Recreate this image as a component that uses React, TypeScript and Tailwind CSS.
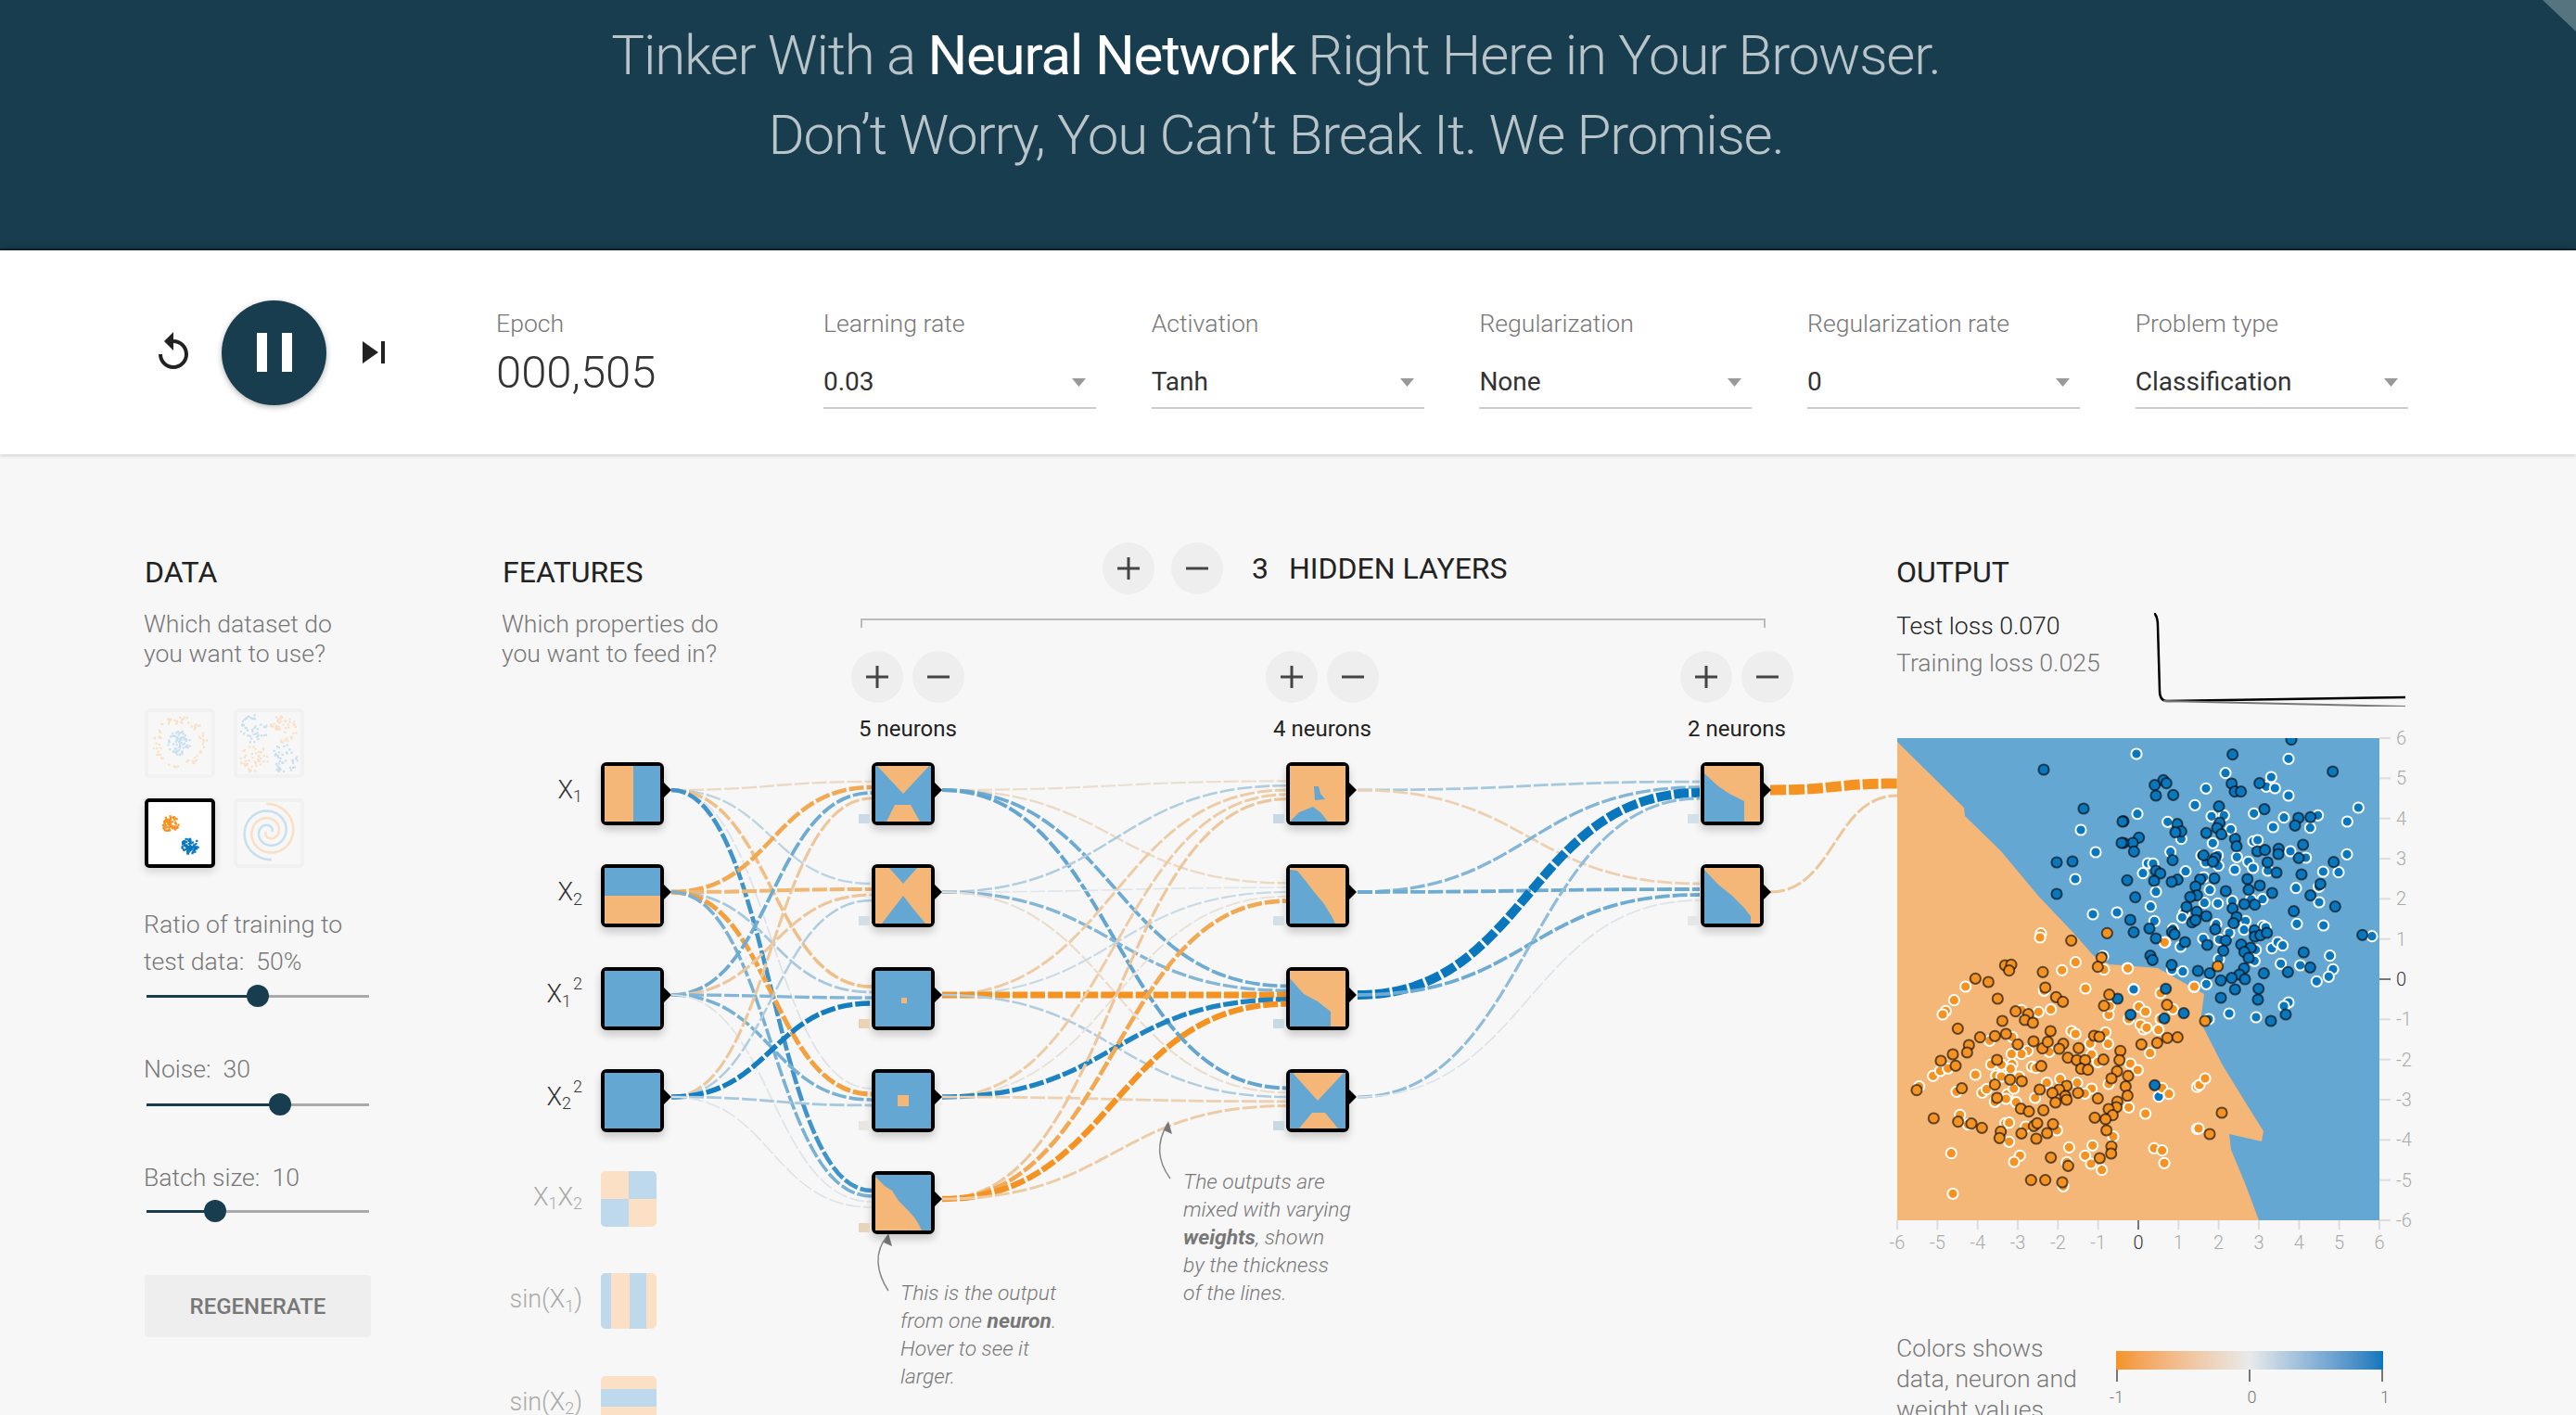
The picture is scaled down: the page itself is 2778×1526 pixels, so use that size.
import { ReactNode } from 'react'

const ORANGE = '#f59322'
const BLUE = '#0877bd'
const HEAT_ORANGE = '#f5b777'
const HEAT_BLUE = '#64a7d3'

type Pt = [number, number]

// small seeded generator so the thumbnails stay the same between renders
function rng(seed: number) {
  let a = seed
  return () => {
    a = (a + 0x6d2b79f5) | 0
    let t = Math.imul(a ^ (a >>> 15), 1 | a)
    t = (t + Math.imul(t ^ (t >>> 7), 61 | t)) ^ t
    return ((t ^ (t >>> 14)) >>> 0) / 4294967296
  }
}

function mix(weight: number) {
  const w = Math.min(1, Math.abs(weight))
  const end = weight < 0 ? [245, 147, 34] : [8, 119, 189]
  const start = [232, 234, 235]
  const c = start.map((s, i) => Math.round(s + (end[i] - s) * w))
  return `rgb(${c[0]},${c[1]},${c[2]})`
}

const inputXY = [852, 962, 1073, 1183]
const layer1Y = [852, 962, 1073, 1183, 1293]
const layer2Y = [852, 962, 1073, 1183]
const layer3Y = [852, 962]

// weights read off the picture, [from][to]
const w0 = [
  [-0.2, 0.2, -0.5, 0.06, 0.75],
  [-0.75, -0.6, 0.3, -0.85, 0.5],
  [0.55, -0.4, 0.45, 0.5, 0.05],
  [-0.4, 0.25, 0.95, 0.3, 0.05],
]
const w1 = [
  [-0.15, -0.2, 0.55, 0.6],
  [0.25, 0.04, 0.45, -0.15],
  [-0.35, 0.15, -1.35, 0.25],
  [-0.35, -0.1, 0.9, -0.3],
  [-0.4, -0.75, -1.15, -0.35],
]
const w2 = [
  [0.3, -0.3],
  [0.45, 0.55],
  [2, 0.55],
  [0.4, 0.05],
]

function Links({ from, to, x1, x2, weights }: { from: number[]; to: number[]; x1: number; x2: number; weights: number[][] }) {
  const n = from.length
  return (
    <>
      {from.map((y1, i) =>
        to.map((dest, j) => {
          const y2 = dest + ((i - (n - 1) / 2) / n) * 24
          const mid = (x1 + x2) / 2
          const w = weights[i][j]
          return (
            <path
              key={`${i}-${j}`}
              d={`M${x1} ${y1}C${mid} ${y1} ${mid} ${y2} ${x2} ${y2}`}
              fill="none"
              stroke={mix(w)}
              strokeWidth={1.5 + 4.2 * Math.abs(w)}
              strokeDasharray="16 3"
            />
          )
        })
      )}
    </>
  )
}

function Network() {
  return (
    <svg className="absolute inset-0 w-[2778px] h-[1036px]" viewBox="0 490 2778 1036">
      <Links from={inputXY} to={layer1Y} x1={724} x2={940} weights={w0} />
      <Links from={layer1Y} to={layer2Y} x1={1016} x2={1388} weights={w1} />
      <Links from={layer2Y} to={layer3Y} x1={1464} x2={1833} weights={w2} />
      <path d="M1909 852C1978 852 1978 845 2046 845" fill="none" stroke={ORANGE} strokeWidth={11} strokeDasharray="17 3" />
      <path d="M1909 962C1978 962 1978 858 2046 858" fill="none" stroke={mix(-0.4)} strokeWidth={3} strokeDasharray="16 3" />
      {/* callout arrows */}
      <path d="M958 1392C945 1372 942 1350 957 1333" fill="none" stroke="#888" strokeWidth={1.5} />
      <polygon points="958,1330 962,1344 953,1340" fill="#777" />
      <path d="M1262 1271C1248 1252 1247 1232 1259 1212" fill="none" stroke="#888" strokeWidth={1.5} />
      <polygon points="1260,1209 1264,1223 1255,1219" fill="#777" />
    </svg>
  )
}

function Heat({ shapes, bg = HEAT_BLUE }: { shapes?: string[]; bg?: string }) {
  const fill = bg === HEAT_BLUE ? HEAT_ORANGE : HEAT_BLUE
  return (
    <svg width="60" height="60" viewBox="0 0 60 60" className="block">
      <rect width="60" height="60" fill={bg} />
      {shapes?.map((s) => <polygon key={s} points={s} fill={fill} />)}
    </svg>
  )
}

function Node({ shapes, bg, bias }: { shapes?: string[]; bg?: string; bias?: string }) {
  return (
    <div className="relative z-10 w-[68px] h-[68px] border-4 border-black rounded-[6px] bg-white shadow-[0_5px_10px_rgba(0,0,0,0.2)]">
      <Heat shapes={shapes} bg={bg} />
      <svg width="9" height="18" viewBox="0 0 9 18" className="absolute left-[63px] top-[17px]">
        <polygon points="0,0 9,9 0,18" fill="#000" />
      </svg>
      {bias && <div className={`absolute -left-[18px] top-[52px] w-[12px] h-[10px] ${bias}`} />}
    </div>
  )
}

const features: { label: ReactNode; shapes?: string[]; bg?: string }[] = [
  { label: <>X<sub className="text-[18px]">1</sub></>, shapes: ['0,0 31,0 31,60 0,60'] },
  { label: <>X<sub className="text-[18px]">2</sub></>, shapes: ['0,30 60,30 60,60 0,60'] },
  { label: <>X<sub className="text-[18px]">1</sub><sup className="text-[18px] ml-[2px] top-[-14px]">2</sup></> },
  { label: <>X<sub className="text-[18px]">2</sub><sup className="text-[18px] ml-[2px] top-[-14px]">2</sup></> },
]

const HOURGLASS = ['2,0 58,0 30,30', '12,60 21,42 38,42 48,60']

const layers: { shapes?: string[]; bg?: string; bias: string }[][] = [
  [
    { shapes: HOURGLASS, bias: 'bg-[#cbdae6]' },
    { bg: HEAT_ORANGE, shapes: ['15,0 45,0 30,17', '7,60 20,43 30,30 40,43 54,60'], bias: 'bg-[#d3dfe7]' },
    { shapes: ['28,29 34,29 34,35 28,35'], bias: 'bg-[#ecd2b2]' },
    { shapes: ['24,24 36,24 36,36 24,36'], bias: 'bg-[#e9e5df]' },
    { shapes: ['0,2 10,12 18,17 25,28 35,38 42,46 46,52 50,60 0,60'], bias: 'bg-[#e8d3bb]' },
  ],
  [
    { bg: HEAT_ORANGE, shapes: ['26,22 31,22 33,30 38,36 27,37', '0,60 10,50 25,44 33,50 41,60'], bias: 'bg-[#c8d9e6]' },
    { bg: HEAT_ORANGE, shapes: ['0,2 8,3 17,14 27,27 37,39 45,52 49,60 0,60'], bias: 'bg-[#d3dfe7]' },
    { bg: HEAT_ORANGE, shapes: ['0,8 15,25 30,33 44,44 44,60 0,60'], bias: 'bg-[#c8d9e6]' },
    { shapes: ['3,0 58,0 30,30', '10,60 24,43 38,43 52,60'], bias: 'bg-[#c8d9e6]' },
  ],
  [
    { bg: HEAT_ORANGE, shapes: ['0,8 15,22 27,30 43,38 43,60 0,60'], bias: 'bg-[#d3dfe9]' },
    { bg: HEAT_ORANGE, shapes: ['0,2 15,18 30,30 42,42 50,52 50,60 0,60'], bias: 'bg-[#e4e6e7]' },
  ],
]

function RoundButton({ minus }: { minus?: boolean }) {
  return (
    <div className="w-[56px] h-[56px] rounded-full bg-[#eeeeee] flex items-center justify-center">
      <svg width="24" height="24" viewBox="0 0 24 24">
        <rect x="0" y="10.5" width="24" height="3" fill="#444" />
        {!minus && <rect x="10.5" y="0" width="3" height="24" fill="#444" />}
      </svg>
    </div>
  )
}

function Slider({ pct }: { pct: number }) {
  return (
    <div className="ml-[2px] w-[240px] h-[24px] flex items-center">
      <div className="h-[3px] bg-[#183d4e]" style={{ width: `${pct}%` }} />
      <div className="w-[24px] h-[24px] rounded-full bg-[#183d4e] -mx-[12px] z-10 shrink-0" />
      <div className="h-[3px] bg-[#aaaaaa] flex-1" />
    </div>
  )
}

const Dots = ({ pts, color, op }: { pts: Pt[]; color: string; op: number }) => (
  <>
    {pts.map((p, i) => <rect key={i} x={p[0] - 1} y={p[1] - 1} width="2.2" height="2.2" fill={color} opacity={op} />)}
  </>
)

function scatter(seed: number, n: number, cx: number, cy: number, sx: number, sy: number): Pt[] {
  const r = rng(seed)
  return Array.from({ length: n }, () => {
    const a = r() * Math.PI * 2
    const d = Math.sqrt(r())
    return [cx + Math.cos(a) * d * sx, cy + Math.sin(a) * d * sy] as Pt
  })
}

function ring(seed: number, n: number, cx: number, cy: number, rad: number, jitter: number): Pt[] {
  const r = rng(seed)
  return Array.from({ length: n }, () => {
    const a = r() * Math.PI * 2
    const d = rad + (r() - 0.5) * jitter
    return [cx + Math.cos(a) * d, cy + Math.sin(a) * d] as Pt
  })
}

function spiral(start: number, cx: number, cy: number): string {
  const pts: string[] = []
  for (let t = 0; t < 1; t += 0.02) {
    const a = start + t * Math.PI * 3.6
    const d = 3 + t * 28
    pts.push(`${(cx + Math.cos(a) * d).toFixed(1)},${(cy - Math.sin(a) * d).toFixed(1)}`)
  }
  return pts.join(' ')
}

function Thumb({ kind, active }: { kind: 'circle' | 'xor' | 'gauss' | 'spiral'; active?: boolean }) {
  const boxClass = active
    ? 'border-4 border-black bg-white shadow-[0_4px_10px_rgba(0,0,0,0.15)]'
    : 'border-4 border-[#f1f1f1]'
  return (
    <div className={`w-[76px] h-[75px] rounded-[5px] ${boxClass}`}>
      <svg width="68" height="67" viewBox="0 0 68 67" className="block">
        {kind === 'circle' && (
          <>
            <Dots pts={ring(3, 70, 34, 33, 25, 8)} color="#f9dfc4" op={1} />
            <Dots pts={scatter(5, 70, 34, 33, 13, 13)} color="#c8dfee" op={1} />
          </>
        )}
        {kind === 'xor' && (
          <>
            <Dots pts={scatter(7, 45, 18, 18, 15, 15)} color="#c8dfee" op={1} />
            <Dots pts={scatter(8, 45, 50, 50, 15, 15)} color="#c8dfee" op={1} />
            <Dots pts={scatter(9, 45, 50, 18, 15, 15)} color="#f9dfc4" op={1} />
            <Dots pts={scatter(10, 45, 18, 50, 15, 15)} color="#f9dfc4" op={1} />
          </>
        )}
        {kind === 'gauss' && (
          <>
            <Dots pts={scatter(11, 70, 24, 24, 9, 9)} color={ORANGE} op={1} />
            <Dots pts={scatter(12, 70, 45, 47, 9, 9)} color={BLUE} op={1} />
          </>
        )}
        {kind === 'spiral' && (
          <>
            <polyline points={spiral(0, 34, 32)} fill="none" stroke="#c8dfee" strokeWidth="2.5" />
            <polyline points={spiral(Math.PI, 34, 32)} fill="none" stroke="#f9dfc4" strokeWidth="2.5" />
          </>
        )}
      </svg>
    </div>
  )
}

function Control({ label, value }: { label: string; value: string }) {
  return (
    <div className="w-[353.7px] shrink-0">
      <div className="w-[294px]">
        <div className="text-[26.6px] leading-[30px] text-[#777777]">{label}</div>
        <div className="mt-[29px] h-[48px] pb-[9px] border-b-2 border-[#cccccc] flex items-center justify-between pr-[11px] text-[#333333] text-[28px] leading-[36px] font-normal">
          <span>{value}</span>
          <svg width="15" height="9" viewBox="0 0 15 9" className="mt-[1px]">
            <polygon points="0,0 15,0 7.5,9" fill="#999" />
          </svg>
        </div>
      </div>
    </div>
  )
}

// points read from two enlarged crops of the plot, crop pixels
const blueTrainA: Pt[] = [[42,69],[534,85],[330,131],[478,144],[462,175],[490,180],[267,181],[534,204],[231,235],[45,263],[760,243],[724,288],[422,262],[285,271],[325,268],[519,275],[629,268],[484,306],[604,308],[143,289],[347,313],[187,344],[289,358],[420,352],[434,348],[152,386],[540,384],[590,405],[723,394],[252,398],[305,397],[367,403],[79,423],[96,424],[63,455],[201,449],[266,420],[307,431],[360,444],[404,418],[419,438],[467,447],[646,450],[696,452],[260,468],[105,515],[279,509],[558,503],[632,499],[633,549],[88,563],[262,551],[305,553],[352,545],[450,539],[413,540],[196,584],[190,598],[100,610],[395,610],[561,619],[647,624],[300,620],[451,625],[460,630],[390,638],[342,648],[804,659],[160,635],[258,667],[310,670],[185,693],[428,703],[480,698],[499,678],[515,689],[668,722],[309,733],[424,739],[509,748],[572,753],[678,766],[664,790],[625,805],[157,767],[192,773],[268,814],[33,830]]
const blueTestA: Pt[] = [[543,23],[353,71],[677,126],[129,154],[101,170],[139,164],[105,204],[161,202],[350,165],[360,191],[380,191],[440,164],[309,239],[456,248],[566,276],[605,274],[555,301],[311,291],[303,309],[0,287],[174,296],[187,320],[168,323],[268,325],[317,329],[361,344],[366,368],[50,340],[30,357],[0,357],[34,385],[159,413],[259,397],[297,406],[289,418],[433,384],[458,380],[502,376],[501,393],[581,363],[567,406],[466,420],[495,453],[576,459],[680,419],[105,447],[119,456],[99,480],[12,478],[175,476],[156,483],[248,475],[294,472],[233,498],[238,527],[216,532],[401,474],[405,509],[441,495],[481,519],[637,490],[605,527],[331,513],[38,533],[204,564],[237,580],[268,594],[222,614],[233,607],[353,569],[391,555],[425,557],[366,597],[356,617],[551,578],[685,563],[22,606],[84,634],[33,646],[105,666],[157,645],[165,653],[297,637],[199,678],[271,687],[331,673],[381,686],[412,696],[391,710],[405,729],[323,706],[424,640],[425,660],[443,656],[464,648],[773,655],[583,711],[87,722],[94,736],[156,752],[241,771],[279,779],[390,763],[375,783],[350,794],[315,802],[393,798],[454,779],[532,775],[604,760],[437,829],[361,831],[137,829]]
const orangeTrainB: Pt[] = [[453,20],[450,33],[565,113],[521,139],[657,137],[733,132],[209,192],[597,198],[172,236],[145,271],[135,282],[463,205],[855,48],[948,193],[840,213],[770,257],[791,273],[880,265],[672,283],[485,266],[445,274],[390,268],[675,255],[737,297],[840,297],[552,336],[785,330],[775,315],[795,325],[833,332],[662,340],[565,345],[670,377],[612,376],[360,355],[287,367],[806,407],[742,441],[766,462],[480,403],[410,400],[390,410],[358,410],[360,443],[292,444],[325,445],[355,458],[424,451],[437,455],[617,412],[637,436],[104,481],[127,465],[152,457],[241,477],[308,480],[325,483],[383,483],[472,503],[515,491],[570,503],[617,522],[672,507],[59,515],[180,532],[263,535],[277,524],[345,540],[365,522],[340,555],[304,565],[373,566],[434,552],[595,538],[845,520],[867,539],[958,516],[737,583],[791,603],[191,607],[217,638],[338,634],[350,632],[404,645],[505,657],[958,652],[687,677],[350,694],[163,731],[385,739],[366,759],[544,712],[620,706],[596,739],[615,765],[650,785],[537,760],[819,715],[845,722],[852,763],[525,838],[168,862]]
const orangeTestB: Pt[] = [[667,19],[551,43],[649,98],[637,128],[337,123],[357,121],[350,140],[459,145],[241,166],[283,177],[467,195],[313,231],[502,226],[524,241],[674,218],[657,254],[861,251],[371,272],[412,281],[401,300],[427,309],[328,303],[184,328],[340,345],[304,352],[256,356],[484,336],[625,351],[642,354],[862,358],[895,356],[829,374],[778,379],[378,379],[429,369],[220,381],[214,405],[168,411],[129,432],[177,448],[311,429],[458,392],[475,371],[525,377],[512,393],[575,391],[710,400],[540,422],[569,430],[596,430],[655,428],[707,430],[583,458],[605,461],[454,449],[699,466],[681,489],[735,481],[353,493],[391,498],[304,509],[197,521],[51,527],[449,525],[727,515],[536,513],[512,525],[490,536],[573,536],[532,546],[536,558],[311,552],[637,554],[733,545],[500,567],[700,564],[697,582],[388,587],[414,596],[461,592],[672,588],[685,608],[627,616],[662,621],[106,618],[185,629],[228,635],[262,649],[323,661],[319,682],[390,667],[430,643],[441,634],[492,637],[473,666],[438,684],[665,657],[681,709],[680,732],[643,747],[485,745],[541,772],[421,818],[467,818],[522,825]]

const fromA = (p: Pt): Pt => [244 + p[0] / 3, p[1] / 3 - 6]
const fromB = (p: Pt): Pt => [4 + p[0] / 3, 204 + p[1] / 3]

const blueTrain: Pt[] = [...blueTrainA.map(fromA), fromB([753,201]), fromB([834,548]), [198,99],[214,123],[192,152],[211,190],[237,188],[222,235],[336,303],[358,297],[387,301],[422,285],[417,289]]
const blueTest: Pt[] = [...blueTestA.map(fromA), fromB([701,231]), fromB([743,283]), fromB([852,295]), fromB([915,278]), fromB([821,511]), [158,34],[201,76],[172,134],[189,133],[172,168],[243,90],[242,113],[349,280],[403,305],[419,298],[389,282]]
const orangeTrain: Pt[] = [...orangeTrainB.map(fromB), fromA([229,822]), fromA([14,763]), fromA([133,679]), [325,421],[326,374],[332,367]]
const orangeTest: Pt[] = [...orangeTestB.map(fromB), fromA([305,756]), [332,305],[350,404],[337,427]]

const REGION = '0,4 72,75 73,84 112,122 152,170 190,210 212,235 229,244 281,248 331,276 327,306 351,353 375,392 395,424 393,435 358,427 360,444 375,480 390,520 0,520'
const TICKS = [-6, -5, -4, -3, -2, -1, 0, 1, 2, 3, 4, 5, 6]

function Plot() {
  const trainDot = (p: Pt, fill: string, i: number) => <circle key={i} cx={p[0]} cy={p[1]} r="5.6" fill={fill} stroke="#fff" strokeWidth="2" />
  const testDot = (p: Pt, fill: string, i: number) => <circle key={i} cx={p[0]} cy={p[1]} r="5.6" fill={fill} stroke="#000" strokeOpacity="0.6" strokeWidth="2" />
  return (
    <svg width="596" height="565" viewBox="-16 -10 596 565" className="block -ml-[15px]">
      <rect width="520" height="520" fill={HEAT_BLUE} />
      <polygon points={REGION} fill={HEAT_ORANGE} />
      <svg width="520" height="520" viewBox="0 0 520 520" overflow="hidden">
        {blueTrain.map((p, i) => trainDot(p, BLUE, i))}
        {orangeTrain.map((p, i) => trainDot(p, ORANGE, i))}
        {blueTest.map((p, i) => testDot(p, BLUE, i))}
        {orangeTest.map((p, i) => testDot(p, ORANGE, i))}
      </svg>
      {TICKS.map((t) => {
        const pos = ((t + 6) / 12) * 520
        const ypos = 520 - pos
        const zero = t === 0
        return (
          <g key={t} fontFamily="Roboto, sans-serif" fontSize="20" fontWeight="300" fill={zero ? '#333' : '#aaa'}>
            <line x1={pos} x2={pos} y1="520" y2="530" stroke={zero ? '#777' : '#ddd'} strokeWidth="2" />
            <text x={pos} y="551" textAnchor="middle">{t}</text>
            <line x1="520" x2="532" y1={ypos} y2={ypos} stroke={zero ? '#777' : '#ddd'} strokeWidth="2" />
            <text x="538" y={ypos + 7}>{t}</text>
          </g>
        )
      })}
    </svg>
  )
}

function SectionHead({ children }: { children: ReactNode }) {
  return <h4 className="ml-[1px] text-[32px] leading-[36px] font-normal text-[#222222]">{children}</h4>
}

function DisabledFeature({ label, kind }: { label: ReactNode; kind: 'xy' | 'sinx' | 'siny' }) {
  const O = '#fbe0c6'
  const B = '#bfd9ec'
  return (
    <div className="flex h-[68px]">
      <div className="w-[87px] h-[60px] flex items-center justify-end text-[#aaaaaa] text-[27px] whitespace-nowrap">
        <span className="-mt-[4px]">{label}</span>
      </div>
      <div className="ml-[20px] w-[60px] h-[60px] rounded-[5px] overflow-hidden relative z-10">
        <svg width="60" height="60" viewBox="0 0 60 60" className="block">
          {kind === 'xy' && (
            <>
              <rect width="60" height="60" fill={O} />
              <rect x="30" width="30" height="30" fill={B} />
              <rect y="30" width="30" height="30" fill={B} />
            </>
          )}
          {kind === 'sinx' && (
            <>
              <rect width="60" height="60" fill={O} />
              <rect width="11" height="60" fill={B} />
              <rect x="31" width="18" height="60" fill={B} />
            </>
          )}
          {kind === 'siny' && (
            <>
              <rect width="60" height="60" fill={O} />
              <rect y="14" width="60" height="19" fill={B} />
            </>
          )}
        </svg>
      </div>
    </div>
  )
}

export default function App() {
  return (
    <div className="w-[2778px] h-[1526px] overflow-hidden bg-[#f7f7f7] font-['Roboto',sans-serif] font-light text-[#777777]">
      <header className="relative h-[270px] bg-[#183d4e] border-b-2 border-[#0f2733] pt-[17px] pr-[26px] text-center text-[60px] leading-[86px] tracking-[-1.2px] text-[#b9c4c9]">
        <div>Tinker With a <b className="font-normal text-white">Neural Network</b> Right Here in Your Browser.</div>
        <div>Don’t Worry, You Can’t Break It. We Promise.</div>
        <svg width="36" height="34" viewBox="0 0 36 34" className="absolute top-0 right-0">
          <polygon points="0,0 36,0 36,34" fill="#56747f" />
        </svg>
      </header>

      <section className="h-[220px] bg-white shadow-[0_-4px_8px_rgba(0,0,0,0.12),0_2px_4px_rgba(0,0,0,0.12)] relative flex pl-[163px] items-start">
        <div className="flex items-center h-[220px] gap-[28px]">
          <svg width="48" height="48" viewBox="0 0 24 24" fill="#222">
            <path d="M12 5V1L7 6l5 5V7c3.31 0 6 2.69 6 6s-2.69 6-6 6-6-2.69-6-6H4c0 4.42 3.58 8 8 8s8-3.58 8-8-3.58-8-8-8z" />
          </svg>
          <div className="w-[113px] h-[113px] rounded-full bg-[#183d4e] shadow-[0_2px_6px_rgba(0,0,0,0.3)] flex items-center justify-center gap-[16px]">
            <div className="w-[11px] h-[42px] bg-white" />
            <div className="w-[11px] h-[42px] bg-white" />
          </div>
          <svg width="48" height="48" viewBox="0 0 24 24" fill="#222" className="-ml-[1px]">
            <path d="M6 18l8.5-6L6 6v12zM16 6v12h2V6h-2z" />
          </svg>
        </div>
        <div className="ml-[108px] w-[353px] shrink-0 pt-[64px]">
          <div className="text-[26.6px] leading-[30px]">Epoch</div>
          <div className="mt-[10px] text-[49px] leading-[56px] text-[#333333]">000,505</div>
        </div>
        <div className="flex pt-[64px]">
          <Control label="Learning rate" value="0.03" />
          <Control label="Activation" value="Tanh" />
          <Control label="Regularization" value="None" />
          <Control label="Regularization rate" value="0" />
          <Control label="Problem type" value="Classification" />
        </div>
      </section>

      <main className="relative h-[1036px] flex pl-[155px]">
        <Network />

        <div className="w-[386px] shrink-0 pt-[109px] text-[26.6px] relative">
          <SectionHead>DATA</SectionHead>
          <p className="mt-[22px] leading-[32px]">Which dataset do<br />you want to use?</p>
          <div className="mt-[43px] ml-[1px] grid grid-cols-[76px_76px] gap-x-[20px] gap-y-[22px]">
            <Thumb kind="circle" />
            <Thumb kind="xor" />
            <Thumb kind="gauss" active />
            <Thumb kind="spiral" />
          </div>
          <div className="mt-[41px] leading-[40px]">Ratio of training to<br />test data:&nbsp; 50%</div>
          <div className="mt-[5px] ml-[1px]"><Slider pct={50} /></div>
          <div className="mt-[51px] leading-[32px]">Noise:&nbsp; 30</div>
          <div className="mt-[10px] ml-[1px]"><Slider pct={60} /></div>
          <div className="mt-[51px] leading-[32px]">Batch size:&nbsp; 10</div>
          <div className="mt-[8px] ml-[1px]"><Slider pct={31} /></div>
          <div className="mt-[57px] ml-[1px] w-[244px] h-[67px] rounded-[4px] bg-[#eeeeee] flex items-center justify-center text-[24px] font-medium text-[#777777]">REGENERATE</div>
        </div>

        <div className="w-[175px] shrink-0 pt-[109px] text-[26.6px] relative">
          <SectionHead>FEATURES</SectionHead>
          <p className="mt-[22px] leading-[32px] whitespace-nowrap">Which properties do<br />you want to feed in?</p>
          <div className="mt-[101px] flex flex-col gap-[42.3px]">
            {features.map((f, i) => (
              <div key={i} className="flex items-center h-[68px]">
                <div className="w-[87px] text-right text-[#333333] text-[27px] -mt-[8px] whitespace-nowrap">{f.label}</div>
                <div className="ml-[20px]"><Node shapes={f.shapes} /></div>
              </div>
            ))}
            <DisabledFeature label={<>X<sub className="text-[18px]">1</sub>X<sub className="text-[18px]">2</sub></>} kind="xy" />
            <DisabledFeature label={<>sin(X<sub className="text-[18px]">1</sub>)</>} kind="sinx" />
            <DisabledFeature label={<>sin(X<sub className="text-[18px]">2</sub>)</>} kind="siny" />
          </div>
        </div>

        <div className="ml-[202px] w-[1016px] shrink-0 pt-[95px] relative">
          <div className="flex items-center pl-[271px] h-[56px] text-[#222222]">
            <RoundButton />
            <div className="ml-[18px]"><RoundButton minus /></div>
            <span className="ml-[31px] text-[32px] font-normal">3</span>
            <span className="ml-[22px] text-[32px] font-normal">HIDDEN LAYERS</span>
          </div>
          <div className="mt-[26px] ml-[10px] w-[976px] h-[10px] border-t-2 border-r-2 border-l-2 border-[#bbbbbb]" />
          <div className="mt-[25px] flex gap-[325px]">
            {layers.map((nodes, i) => (
              <div key={i} className="w-[122px] shrink-0">
                <div className="flex gap-[10px]">
                  <RoundButton />
                  <RoundButton minus />
                </div>
                <div className="mt-[13px] h-[30px] text-center text-[24px] leading-[30px] font-normal text-[#222222] whitespace-nowrap">{nodes.length} neurons</div>
                <div className="mt-[21px] flex flex-col gap-[42.3px] ml-[22px]">
                  {nodes.map((n, j) => <Node key={j} shapes={n.shapes} bg={n.bg} bias={n.bias} />)}
                </div>
              </div>
            ))}
          </div>
          <p className="absolute left-[53px] top-[890px] w-[250px] italic text-[22.8px] leading-[30px]">This is the output<br />from one <b className="font-bold">neuron</b>.<br />Hover to see it<br />larger.</p>
          <p className="absolute left-[358px] top-[770px] w-[250px] italic text-[22.8px] leading-[30px]">The outputs are<br />mixed with varying<br /><b className="font-bold">weights</b>, shown<br />by the thickness<br />of the lines.</p>
        </div>

        <div className="ml-[111px] w-[620px] shrink-0 pt-[109px] text-[26.6px] relative">
          <h4 className="text-[32px] leading-[36px] font-normal text-[#222222]">OUTPUT</h4>
          <div className="mt-[20px] flex h-[112px]">
            <div className="w-[278px] leading-[40px]">
              <div className="text-[#222222]">Test loss 0.070</div>
              <div>Training loss 0.025</div>
            </div>
            <svg width="271" height="101" viewBox="0 0 271 101" className="mt-[6px]">
              <path d="M0 0C3 3 4 6 4 14L6 84C6 92 9 95 14 95L271 91" fill="none" stroke="#000" strokeWidth="2.5" />
              <path d="M10 95L271 101" fill="none" stroke="#777" strokeWidth="2" />
            </svg>
          </div>
          <div className="mt-[19px]"><Plot /></div>
          <div className="mt-[83px] flex">
            <div className="w-[237px] pt-[3px] leading-[33px]">Colors shows<br />data, neuron and<br />weight values.</div>
            <div className="mt-[23px] w-[288px] text-[18px]">
              <div className="h-[20px] bg-gradient-to-r from-[#f59322] via-[#e8eaeb] to-[#0877bd]" />
              <div className="flex justify-between h-[13px]">
                <div className="w-[2px] bg-[#777777]" />
                <div className="w-[2px] bg-[#777777]" />
                <div className="w-[2px] bg-[#777777]" />
              </div>
              <div className="flex justify-between -mx-[7px] leading-[22px] mt-[6px]">
                <span>-1</span>
                <span>0</span>
                <span>1</span>
              </div>
            </div>
          </div>
        </div>
      </main>
    </div>
  )
}
